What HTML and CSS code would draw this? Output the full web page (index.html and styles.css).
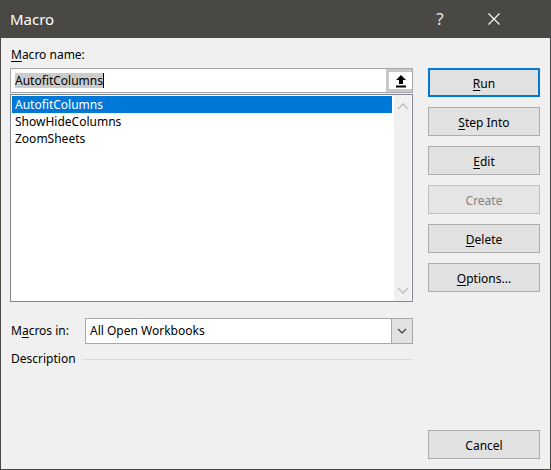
FILE: index.html
```html
<!DOCTYPE html>
<html>
<head>
<meta charset="utf-8">
<link rel="stylesheet" href="styles.css">
</head>
<body>
<div class="window">
  <div class="titlebar">
    <span class="title">Macro</span>
    <span class="help">?</span>
    <span class="close">
      <svg width="12" height="12" viewBox="0 0 12 12"><path d="M0.5 0.5 L11.5 11.5 M11.5 0.5 L0.5 11.5" stroke="#ffffff" stroke-width="1.1" fill="none"/></svg>
    </span>
  </div>
  <div class="content">
    <div class="left">
      <div class="label"><u>M</u>acro name:</div>
      <div class="namebox">
        <div class="nametext"><span class="sel">AutofitColumns</span><span class="caret"></span></div>
        <div class="upbtn">
          <svg width="12" height="14" viewBox="0 0 12 14"><path d="M6 1 L11 6 L8 6 L8 10 L4 10 L4 6 L1 6 Z" fill="#000"/><rect x="1" y="11.5" width="10" height="2" fill="#000"/></svg>
        </div>
      </div>
      <div class="list">
        <div class="items">
          <div class="item selected">AutofitColumns</div>
          <div class="item">ShowHideColumns</div>
          <div class="item">ZoomSheets</div>
        </div>
        <div class="scroll">
          <svg width="14" height="8" viewBox="0 0 14 8"><path d="M2 7 L7 2 L12 7" stroke="#c2c2c2" stroke-width="1.6" fill="none"/></svg>
          <svg width="14" height="8" viewBox="0 0 14 8"><path d="M2 1 L7 6 L12 1" stroke="#c2c2c2" stroke-width="1.6" fill="none"/></svg>
        </div>
      </div>
      <div class="inrow">
        <span class="label">M<u>a</u>cros in:</span>
        <div class="combo">
          <span class="combotext">All Open Workbooks</span>
          <span class="combobtn">
            <svg width="10" height="6" viewBox="0 0 10 6"><path d="M1 1 L5 5 L9 1" stroke="#404040" stroke-width="1.2" fill="none"/></svg>
          </span>
        </div>
      </div>
      <div class="desc">
        <span class="label">Description</span>
        <span class="rule"></span>
      </div>
    </div>
    <div class="right">
      <div class="btn default"><span><u>R</u>un</span></div>
      <div class="btn"><span><u>S</u>tep Into</span></div>
      <div class="btn"><span><u>E</u>dit</span></div>
      <div class="btn disabled"><span>Create</span></div>
      <div class="btn"><span><u>D</u>elete</span></div>
      <div class="btn"><span><u>O</u>ptions...</span></div>
      <div class="btn cancel"><span>Cancel</span></div>
    </div>
  </div>
</div>
</body>
</html>
```
FILE: styles.css
```css
html, body {
  margin: 0;
  padding: 0;
  background: #f0f0f0;
}
body {
  font-family: "Segoe UI", "Noto Sans", "Open Sans", sans-serif;
  font-size: 12px;
  color: #000;
}
.window {
  width: 551px;
  height: 470px;
  box-sizing: border-box;
  border: 1px solid #4a4845;
  border-top: none;
  background: #f0f0f0;
  display: flex;
  flex-direction: column;
}
.titlebar {
  height: 38px;
  background: #4a4845;
  color: #fff;
  display: flex;
  align-items: center;
  margin: 0 -1px;
  padding: 0 0 0 10px;
}
.title {
  font-size: 15px;
  flex: 1;
  padding-bottom: 1px;
}
.help {
  font-size: 17px;
  width: 20px;
  text-align: center;
  margin-right: 38px;
  color: #e8e8e8;
  padding-bottom: 1px;
}
.close {
  width: 12px;
  height: 12px;
  margin-right: 51px;
  display: flex;
}
.content {
  flex: 1;
  display: flex;
  padding: 9px 10px 10px 9px;
  gap: 15px;
}
.left {
  width: 403px;
  display: flex;
  flex-direction: column;
}
.label {
  line-height: 16px;
  white-space: nowrap;
}
.left > .label {
  margin-bottom: 5px;
  padding-left: 1px;
}
.namebox {
  height: 25px;
  box-sizing: border-box;
  border: 1px solid #a8a8a8;
  background: #fff;
  display: flex;
}
.nametext {
  flex: 1;
  display: flex;
  align-items: center;
  padding-left: 4px;
}
.sel {
  background: #cccccc;
  line-height: 15px;
}
.caret {
  width: 1px;
  height: 15px;
  background: #000;
}
.upbtn {
  width: 26px;
  box-sizing: border-box;
  border: 3px solid #c8c8c8;
  border-right: none;
  background: #fff;
  display: flex;
  align-items: center;
  justify-content: center;
}
.list {
  margin-top: 1px;
  height: 208px;
  box-sizing: border-box;
  border: 1px solid #828790;
  background: #fff;
  display: flex;
  padding: 1px;
}
.items {
  flex: 1;
  padding-right: 2px;
}
.item {
  height: 17px;
  line-height: 17px;
  padding-left: 3px;
}
.item.selected {
  background: #0078d7;
  color: #fff;
}
.scroll {
  width: 17px;
  background: #f0f0f0;
  display: flex;
  flex-direction: column;
  justify-content: space-between;
  align-items: center;
  padding: 7px 0 6px;
  margin: -1px 0;
}
.inrow {
  margin-top: 16px;
  display: flex;
  align-items: center;
}
.inrow .label {
  width: 75px;
  box-sizing: border-box;
  padding-left: 1px;
}
.combo {
  flex: 1;
  height: 26px;
  box-sizing: border-box;
  border: 1px solid #a8a8a8;
  background: #fff;
  display: flex;
}
.combotext {
  flex: 1;
  line-height: 24px;
  padding-left: 4px;
}
.combobtn {
  width: 20px;
  background: #e1e1e1;
  border-left: 1px solid #a8a8a8;
  display: flex;
  align-items: center;
  justify-content: center;
}
.desc {
  margin-top: 7px;
  display: flex;
  align-items: center;
  gap: 6px;
}
.desc .label {
  padding-left: 1px;
}
.rule {
  flex: 1;
  height: 1px;
  background: #dcdcdc;
}
.right {
  width: 112px;
  display: flex;
  flex-direction: column;
  gap: 10px;
  padding-top: 21px;
}
.btn {
  height: 29px;
  box-sizing: border-box;
  border: 1px solid #adadad;
  background: #e1e1e1;
  display: flex;
  align-items: center;
  justify-content: center;
}
.btn span {
  padding-top: 1px;
}
.btn.default {
  border: 2px solid #0078d7;
}
.btn.disabled {
  color: #838383;
  border-color: #bfbfbf;
  background: #e5e5e5;
}
.btn.cancel {
  margin-top: auto;
}
u {
  text-decoration-thickness: 1px;
  text-underline-offset: 2px;
}
```
